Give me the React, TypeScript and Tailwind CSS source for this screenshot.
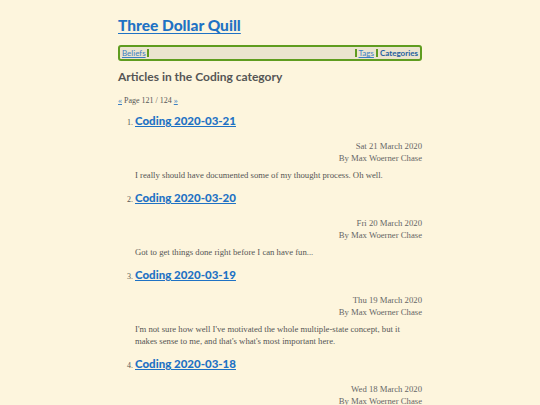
import React from 'react';

interface Article {
  title: string;
  date: string;
  excerpt: string;
}

const articles: Article[] = [
  {
    title: 'Coding 2020-03-21',
    date: 'Sat 21 March 2020',
    excerpt: 'I really should have documented some of my thought process. Oh well.',
  },
  {
    title: 'Coding 2020-03-20',
    date: 'Fri 20 March 2020',
    excerpt: 'Got to get things done right before I can have fun...',
  },
  {
    title: 'Coding 2020-03-19',
    date: 'Thu 19 March 2020',
    excerpt:
      "I'm not sure how well I've motivated the whole multiple-state concept, but it makes sense to me, and that's what's most important here.",
  },
  {
    title: 'Coding 2020-03-18',
    date: 'Wed 18 March 2020',
    excerpt: 'More progress on the state machine.',
  },
];

const heading = "font-['Lato','Open_Sans',sans-serif]";
const body = "font-['Liberation_Serif',serif]";

const App: React.FC = () => {
  return (
    <div className={`min-h-[405px] bg-[#fdf5dd] ${body}`}>
      <div className="mx-auto w-[304px] pt-[14px]">
        <h1 className={`${heading} text-[15.5px] font-black leading-[22px]`}>
          <a href="#" className="text-[#1f72c4] underline underline-offset-2">
            Three Dollar Quill
          </a>
        </h1>

        <nav
          className={`${heading} mt-[9px] flex h-[16px] items-center rounded-[3px] border-2 border-[#5f9c1f] bg-[#ebe4cf] text-[8px] leading-none`}
        >
          <a href="#" className="border-r-2 border-[#5f9c1f] pl-[2px] pr-[1px] text-[#3b7fc2] underline">
            Beliefs
          </a>
          <div className="flex-1" />
          <a href="#" className="border-l-2 border-[#5f9c1f] px-[2px] text-[#3b7fc2] underline">
            Tags
          </a>
          <a href="#" className="border-l-2 border-[#5f9c1f] px-[2px] font-bold text-[#1f5f9e]">
            Categories
          </a>
        </nav>

        <h2 className={`${heading} mt-[8px] text-[12px] font-bold leading-[16px] text-[#555]`}>
          Articles in the Coding category
        </h2>

        <p className="mt-[11px] text-[8px] leading-[10px] text-[#555]">
          <a href="#" className="text-[#3b7fc2] underline">«</a> Page 121 / 124{' '}
          <a href="#" className="text-[#3b7fc2] underline">»</a>
        </p>

        <ol className="mt-[6px] list-decimal pl-[17px] text-[#555] marker:text-[8px]">
          {articles.map((a) => (
            <li key={a.title} className="mb-[8px]">
              <h3 className={`${heading} text-[11.5px] font-black leading-[18px]`}>
                <a href="#" className="text-[#1f72c4] underline underline-offset-1">
                  {a.title}
                </a>
              </h3>
              <div className="mt-[10px] text-right text-[8.7px] leading-[12px] text-[#666]">
                <div>{a.date}</div>
                <div>By Max Woerner Chase</div>
              </div>
              <p className="mt-[5px] text-[8.7px] leading-[12px] text-[#555]">{a.excerpt}</p>
            </li>
          ))}
        </ol>
      </div>
    </div>
  );
};

export default App;
